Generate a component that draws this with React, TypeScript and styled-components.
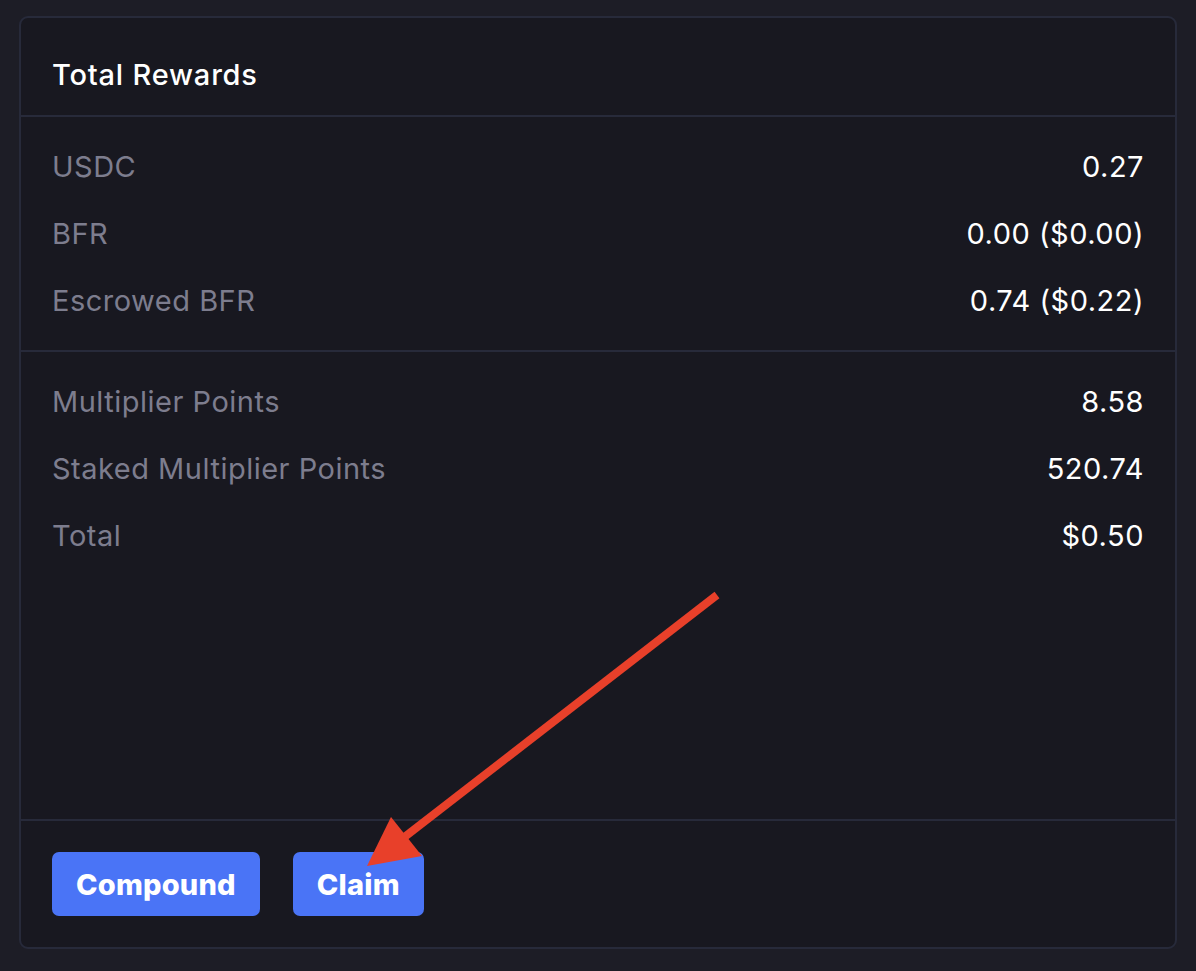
import { FunctionComponent } from 'react';
import styled, { createGlobalStyle } from 'styled-components';

interface Reward {
  label: string;
  value: string;
}

const tokenRewards: Reward[] = [
  { label: 'USDC', value: '0.27' },
  { label: 'BFR', value: '0.00 ($0.00)' },
  { label: 'Escrowed BFR', value: '0.74 ($0.22)' },
];

const pointRewards: Reward[] = [
  { label: 'Multiplier Points', value: '8.58' },
  { label: 'Staked Multiplier Points', value: '520.74' },
  { label: 'Total', value: '$0.50' },
];

const RewardRows: FunctionComponent<{ items: Reward[] }> = ({ items }) => (
  <>
    {
      items.map((item) => (
        <Row key={ item.label }>
          <Label>{ item.label }</Label>
          <Value>{ item.value }</Value>
        </Row>
      ))
    }
  </>
);

const App: FunctionComponent = () => (
  <>
    <GlobalStyle/>
    <Page>
      <Card>
        <Header>Total Rewards</Header>
        <Section>
          <RewardRows items={ tokenRewards }/>
        </Section>
        <Section grow>
          <RewardRows items={ pointRewards }/>
        </Section>
        <Footer>
          <Button>Compound</Button>
          <Button>Claim</Button>
        </Footer>
        <Arrow viewBox="0 0 1157 932" width="1157" height="932">
          <line x1="696" y1="577" x2="368" y2="831" stroke="#e8402a" strokeWidth="8"/>
          <polygon points="346,848 370,799 401,838" fill="#e8402a"/>
        </Arrow>
      </Card>
    </Page>
  </>
);

export default App;

const GlobalStyle = createGlobalStyle`
  html, body {
    margin: 0;
    padding: 0;
    background: #1d1d26;
  }
  body {
    font-family: Inter, "Noto Sans", sans-serif;
    -webkit-font-smoothing: antialiased;
  }
`;

const Page = styled.div`
  padding: 16px 20px 23px 19px;
`;

const Card = styled.div`
  position: relative;
  box-sizing: border-box;
  width: 1158px;
  height: 933px;
  display: flex;
  flex-direction: column;
  background: #181820;
  border: 2px solid #272a3a;
  border-radius: 9px;
`;

const Header = styled.div`
  box-sizing: border-box;
  height: 99px;
  padding: 0 31px 23px;
  display: flex;
  align-items: flex-end;
  font-size: 29px;
  font-weight: 500;
  letter-spacing: 0.8px;
  color: #ffffff;
  border-bottom: 2px solid #272a3a;
`;

const Section = styled.div<{ grow?: boolean }>`
  display: flex;
  flex-direction: column;
  padding: 16px 31px;
  flex: ${ ({ grow }) => grow ? 1 : 'none' };
  border-bottom: 2px solid #272a3a;
`;

const Row = styled.div`
  height: 67px;
  display: flex;
  align-items: center;
  justify-content: space-between;
  font-size: 29px;
  letter-spacing: 0.5px;
`;

const Label = styled.span`
  color: #7d7d8e;
`;

const Value = styled.span`
  color: #ffffff;
`;

const Footer = styled.div`
  display: flex;
  gap: 33px;
  padding: 31px;
`;

const Button = styled.button`
  height: 64px;
  padding: 0 24px;
  border: none;
  border-radius: 7px;
  background: #4a74f6;
  color: #ffffff;
  font-family: Inter, "Noto Sans", sans-serif;
  font-size: 29px;
  font-weight: 800;
  letter-spacing: 0.2px;
`;

const Arrow = styled.svg`
  position: absolute;
  left: 0;
  top: 0;
  pointer-events: none;
`;
